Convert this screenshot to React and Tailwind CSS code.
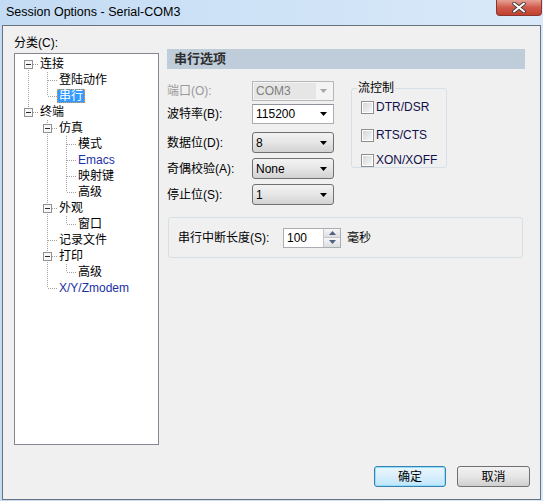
import React from "react";

const FONT = { fontFamily: '"Liberation Sans", "Noto Sans CJK SC", sans-serif' };

// flattened tree: anc = whether each ancestor level still has a sibling below
const treeRows = [
  { label: "连接", depth: 0, anc: [], first: true, last: false, open: true },
  { label: "登陆动作", depth: 1, anc: [true], last: false },
  { label: "串行", depth: 1, anc: [true], last: true, selected: true },
  { label: "终端", depth: 0, anc: [], last: true, open: true },
  { label: "仿真", depth: 1, anc: [false], last: false, open: true },
  { label: "模式", depth: 2, anc: [false, true], last: false },
  { label: "Emacs", depth: 2, anc: [false, true], last: false, blue: true },
  { label: "映射键", depth: 2, anc: [false, true], last: false },
  { label: "高级", depth: 2, anc: [false, true], last: true },
  { label: "外观", depth: 1, anc: [false], last: false, open: true },
  { label: "窗口", depth: 2, anc: [false, true], last: true },
  { label: "记录文件", depth: 1, anc: [false], last: false },
  { label: "打印", depth: 1, anc: [false], last: false, open: true },
  { label: "高级", depth: 2, anc: [false, true], last: true },
  { label: "X/Y/Zmodem", depth: 1, anc: [false], last: true, blue: true },
];

const DOT = { stroke: "#a0a0a0", strokeWidth: 1, strokeDasharray: "1 1" };

function AncestorCell({ line }) {
  return (
    <svg width="19" height="16" className="shrink-0 block">
      {line && <line x1="9.5" y1="0" x2="9.5" y2="16" {...DOT} />}
    </svg>
  );
}

function NodeCell({ first, last, open }) {
  return (
    <svg width="19" height="16" className="shrink-0 block">
      {!first && <line x1="9.5" y1="0" x2="9.5" y2="8" {...DOT} />}
      {!last && <line x1="9.5" y1="8" x2="9.5" y2="16" {...DOT} />}
      <line x1="10" y1="8.5" x2="19" y2="8.5" {...DOT} />
      {open && (
        <g>
          <rect x="5.5" y="4.5" width="8" height="8" fill="#f7f7f7" stroke="#919191" />
          <line x1="7" y1="8.5" x2="12" y2="8.5" stroke="#2b2b2b" />
        </g>
      )}
    </svg>
  );
}

function TreeRow({ row }) {
  return (
    <div className="flex h-[16px] items-center">
      {row.anc.map((a, i) => (
        <AncestorCell key={i} line={a} />
      ))}
      <NodeCell first={row.first} last={row.last} open={row.open} />
      <span
        className={
          "h-[14px] leading-[12px] px-[1px] border whitespace-nowrap text-[12px] " +
          (row.selected
            ? "bg-[#3399ff] text-white border-dotted border-[#e0a050]"
            : row.blue
            ? "border-transparent text-[#1b2fa6]"
            : "border-transparent text-black")
        }
      >
        {row.label}
      </span>
    </div>
  );
}

function Arrow({ disabled }) {
  return (
    <svg width="7" height="4" viewBox="0 0 7 4" className="block">
      <path d="M0 0h7L3.5 4z" fill={disabled ? "#a8a8a8" : "#000"} />
    </svg>
  );
}

function ButtonCombo({ value }) {
  return (
    <div className="w-[82px] h-[21px] rounded-[3px] border border-[#707070] bg-linear-to-b from-[#f3f3f3] via-[#e6e6e6] to-[#d2d2d2] flex items-center pl-[3px] pr-[6px] justify-between">
      <span className="text-[12px] text-black">{value}</span>
      <Arrow />
    </div>
  );
}

function Checkbox({ label }) {
  return (
    <div className="flex items-center gap-[2px]">
      <div className="w-[13px] h-[13px] border border-[#8e8f8f] bg-white p-[1px]">
        <div className="w-full h-full bg-linear-to-br from-[#d5d7da] to-[#f7f7f7]" />
      </div>
      <span className="text-[12px] text-[#10104a]">{label}</span>
    </div>
  );
}

function FormRow({ label, disabled, children, className }) {
  return (
    <div className={"flex items-center " + className}>
      <span className={"w-[85px] text-[12px] " + (disabled ? "text-[#9a9a9a]" : "text-black")}>
        {label}
      </span>
      {children}
    </div>
  );
}

export default function App() {
  return (
    <div
      className="w-[543px] h-[501px] flex flex-col bg-linear-to-r from-[#c3dbf3] via-[#cfe3f7] to-[#d9e9f9] px-[2px] pb-[1px] overflow-hidden"
      style={FONT}
    >
      {/* title bar */}
      <div className="h-[25px] flex justify-between shrink-0">
        <span className="text-[12.5px] text-black pl-[4px] pt-[4px] leading-[16px]">
          Session Options - Serial-COM3
        </span>
        <div className="w-[46px] h-[16px] mr-[-1px] rounded-b-[4px] border border-t-0 border-[#8a3430] bg-linear-to-b from-[#e7a196] via-[#cf5a4b] to-[#c2402f] flex items-center justify-center">
          <svg width="14" height="11" viewBox="0 0 14 11">
            <path
              d="M2 1.5L12 9.5M12 1.5L2 9.5"
              stroke="#3b3b3b"
              strokeWidth="3.6"
              strokeLinecap="round"
            />
            <path d="M2 1.5L12 9.5M12 1.5L2 9.5" stroke="#fff" strokeWidth="2" strokeLinecap="round" />
          </svg>
        </div>
      </div>

      {/* client area */}
      <div className="flex-1 flex flex-col border border-[#68727c] bg-[#f0f0f0]">
        <div className="flex">
          {/* category tree */}
          <div className="ml-[11px] flex flex-col">
            <span className="mt-[9px] h-[16px] leading-[16px] text-[12px] text-black">分类(C):</span>
            <div className="mt-[2px] w-[145px] h-[392px] border border-[#828790] bg-white pt-[2px] pl-[4px] overflow-hidden">
              {treeRows.map((row, i) => (
                <TreeRow key={i} row={row} />
              ))}
            </div>
          </div>

          {/* serial options */}
          <div className="ml-[8px] mt-[23px] w-[358px] flex flex-col">
            <div className="h-[20px] bg-[#bfcddb] flex items-center pl-[7px]">
              <span className="text-[13px] font-bold text-[#2e2e2e]">串行选项</span>
            </div>

            <div className="flex">
              <div className="w-[184px] flex flex-col">
                <FormRow label="端口(O):" disabled className="mt-[12px]">
                  <div className="w-[82px] h-[20px] border border-[#b4b8bb] bg-[#f4f4f4] flex items-center pl-[1px] pr-[6px] justify-between">
                    <span className="w-[62px] h-[16px] bg-[#e6e6e6] text-[12px] leading-[16px] pl-[2px] text-[#7e7e7e]">
                      COM3
                    </span>
                    <Arrow disabled />
                  </div>
                </FormRow>
                <FormRow label="波特率(B):" className="mt-[3px]">
                  <div className="w-[82px] h-[20px] border border-[#abadb3] border-t-[#8f949c] bg-white flex items-center pl-[3px] pr-[6px] justify-between">
                    <span className="text-[12px] text-black">115200</span>
                    <Arrow />
                  </div>
                </FormRow>
                <FormRow label="数据位(D):" className="mt-[8px]">
                  <ButtonCombo value="8" />
                </FormRow>
                <FormRow label="奇偶校验(A):" className="mt-[5px]">
                  <ButtonCombo value="None" />
                </FormRow>
                <FormRow label="停止位(S):" className="mt-[5px]">
                  <ButtonCombo value="1" />
                </FormRow>
              </div>

              <fieldset className="mt-[13px] w-[96px] h-[86px] border border-[#d5dfe5] rounded-[3px]">
                <legend className="ml-[5px] px-[1px] text-[12px] leading-[12px] text-black">流控制</legend>
                <div className="ml-[9px] mt-[4px] flex flex-col">
                  <Checkbox label="DTR/DSR" />
                  <div className="mt-[10px]">
                    <Checkbox label="RTS/CTS" />
                  </div>
                  <div className="mt-[7px]">
                    <Checkbox label="XON/XOFF" />
                  </div>
                </div>
              </fieldset>
            </div>

            {/* break length */}
            <div className="mt-[12px] ml-[1px] w-[355px] h-[41px] border border-[#d5dfe5] rounded-[3px] flex items-center pl-[9px]">
              <span className="w-[105px] text-[12px] text-black">串行中断长度(S):</span>
              <div className="w-[58px] h-[20px] border border-[#abadb3] bg-white flex">
                <span className="flex-1 text-[12px] leading-[18px] pl-[3px] text-black">100</span>
                <div className="w-[17px] flex flex-col border-l border-[#c4c6ca]">
                  <div className="flex-1 flex items-center justify-center bg-linear-to-b from-[#f6f6f6] to-[#dedede] border-b border-[#c4c6ca]">
                    <svg width="7" height="4" viewBox="0 0 7 4">
                      <path d="M0 4h7L3.5 0z" fill="#4d6185" />
                    </svg>
                  </div>
                  <div className="flex-1 flex items-center justify-center bg-linear-to-b from-[#f6f6f6] to-[#dedede]">
                    <svg width="7" height="4" viewBox="0 0 7 4">
                      <path d="M0 0h7L3.5 4z" fill="#4d6185" />
                    </svg>
                  </div>
                </div>
              </div>
              <span className="ml-[6px] text-[12px] text-black">毫秒</span>
            </div>
          </div>
        </div>

        {/* buttons */}
        <div className="mt-auto flex justify-end gap-[11px] pr-[10px] pb-[12px]">
          <button className="w-[72px] h-[21px] rounded-[3px] border border-[#3c7fb1] bg-linear-to-b from-[#eaf6fd] via-[#d9effc] to-[#bee6fd] shadow-[inset_0_0_0_1px_#8fe0fb] text-[12px] text-black">
            确定
          </button>
          <button className="w-[73px] h-[21px] rounded-[3px] border border-[#707070] bg-linear-to-b from-[#f2f2f2] via-[#e6e6e6] to-[#cfcfcf] text-[12px] text-black">
            取消
          </button>
        </div>
      </div>
    </div>
  );
}
